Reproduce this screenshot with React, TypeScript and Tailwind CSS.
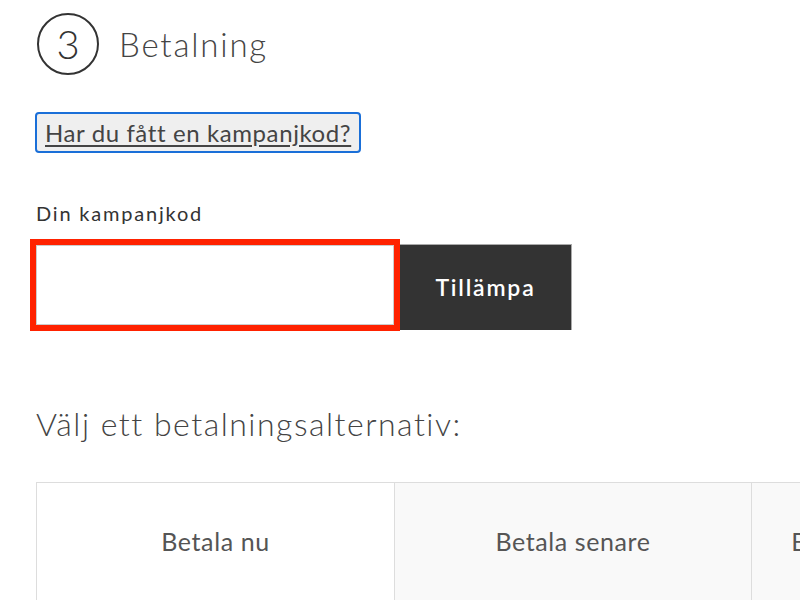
import React from "react";

const font = { fontFamily: "Lato, 'Noto Sans', sans-serif" };

const options = [
  { label: "Betala nu", active: true },
  { label: "Betala senare", active: false },
  { label: "Betala med delbetalning", active: false },
];

export default function App() {
  return (
    <div className="w-[800px] h-[600px] overflow-hidden bg-white text-[#333]" style={font}>
      <div className="pl-[36px] pt-[13px]">
        {/* steg-rubrik */}
        <div className="flex items-center">
          <div className="w-[62px] h-[62px] ml-[1px] rounded-full border-2 border-[#333] flex items-center justify-center text-[40px] font-light leading-none text-[#333]">
            3
          </div>
          <h2 className="ml-[20px] text-[33px] font-light tracking-[1.8px] text-[#444] leading-none">Betalning</h2>
        </div>

        <button className="mt-[37px] -ml-[1px] h-[41px] px-[8px] bg-[#efefef] border-2 border-[#1a6fd8] rounded-[4px] text-[24px] tracking-[0.6px] text-[#444] underline underline-offset-[3px] leading-none">
          Har du fått en kampanjkod?
        </button>

        <label className="block mt-[48px] text-[20px] tracking-[1.8px] text-[#333] leading-[25px]">Din kampanjkod</label>

        <div className="flex items-start mt-[18px]">
          <input
            type="text"
            className="mt-[1px] w-[358px] h-[80px] border border-[#ccc] outline-[6px] outline-solid outline-[#ff2200] bg-white"
          />
          <button className="ml-[6px] w-[172px] h-[86px] bg-[#333] text-white text-[23px] tracking-[1.8px] font-semibold border border-[#aaa] border-l-0 border-b-0">
            Tillämpa
          </button>
        </div>

        <h3 className="mt-[74px] text-[32px] font-light tracking-[1.5px] text-[#444] leading-[40px]">
          Välj ett betalningsalternativ:
        </h3>

        <div className="mt-[38px] flex w-[1200px] border border-[#ddd]">
          {options.map((o, i) => (
            <div
              key={o.label}
              className={`w-[357px] h-[150px] shrink-0 flex justify-center pt-[40px] text-[25px] tracking-[0.6px] text-[#555] whitespace-nowrap ${
                o.active ? "bg-white" : "bg-[#f9f9f9]"
              } ${i > 0 ? "border-l border-[#ddd]" : ""}`}
            >
              {o.label}
            </div>
          ))}
        </div>
      </div>
    </div>
  );
}
